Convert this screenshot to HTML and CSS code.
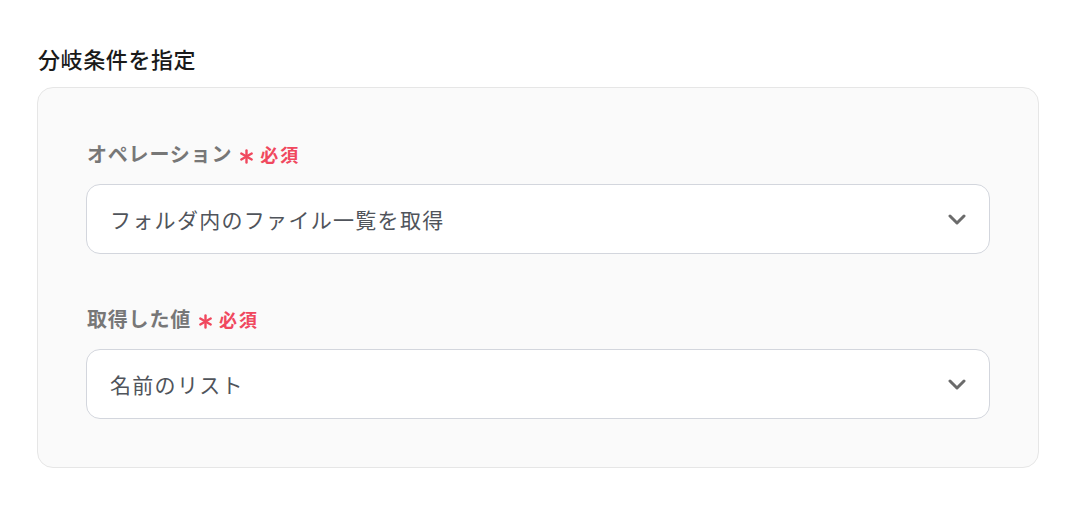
FILE: index.html
```html
<!DOCTYPE html>
<html lang="ja">
<head>
<meta charset="utf-8">
<link rel="stylesheet" href="styles.css">
</head>
<body>
<div class="page">
  <h2 class="title">分岐条件を指定</h2>
  <div class="panel">
    <div class="field">
      <div class="label">オペレーション<span class="req"><svg class="ast" width="15" height="15" viewBox="0 0 15 15"><g stroke="#f0485e" stroke-width="2.4" stroke-linecap="round"><line x1="7.5" y1="1.5" x2="7.5" y2="13.5"/><line x1="2.3" y1="4.5" x2="12.7" y2="10.5"/><line x1="2.3" y1="10.5" x2="12.7" y2="4.5"/></g></svg>必須</span></div>
      <div class="select">
        <span class="value">フォルダ内のファイル一覧を取得</span>
        <svg class="chev" width="20" height="12" viewBox="0 0 20 12"><path d="M3 3 L10 10 L17 3" fill="none" stroke="#6b6b6b" stroke-width="3" stroke-linecap="round" stroke-linejoin="round"/></svg>
      </div>
    </div>
    <div class="field">
      <div class="label">取得した値<span class="req"><svg class="ast" width="15" height="15" viewBox="0 0 15 15"><g stroke="#f0485e" stroke-width="2.4" stroke-linecap="round"><line x1="7.5" y1="1.5" x2="7.5" y2="13.5"/><line x1="2.3" y1="4.5" x2="12.7" y2="10.5"/><line x1="2.3" y1="10.5" x2="12.7" y2="4.5"/></g></svg>必須</span></div>
      <div class="select">
        <span class="value">名前のリスト</span>
        <svg class="chev" width="20" height="12" viewBox="0 0 20 12"><path d="M3 3 L10 10 L17 3" fill="none" stroke="#6b6b6b" stroke-width="3" stroke-linecap="round" stroke-linejoin="round"/></svg>
      </div>
    </div>
  </div>
</div>
</body>
</html>
```
FILE: styles.css
```css
* { box-sizing: border-box; }
html, body { margin: 0; padding: 0; background: #ffffff; }
body {
  font-family: "Noto Sans CJK JP", "Noto Sans", sans-serif;
  width: 1078px;
  height: 528px;
  overflow: hidden;
}
.page {
  padding: 42px 39px 0 37px;
}
.title {
  margin: 0 0 13px 1px;
  font-size: 22px;
  line-height: 32px;
  font-weight: 500;
  color: #1a1a1a;
  letter-spacing: 0.6px;
}
.panel {
  background: #fafafa;
  border: 1px solid #e6e6e6;
  border-radius: 16px;
  padding: 49px 48px 48px 48px;
  display: flex;
  flex-direction: column;
  gap: 48px;
}
.field {
  display: flex;
  flex-direction: column;
  gap: 13px;
}
.label {
  font-size: 20px;
  line-height: 34px;
  font-weight: 700;
  color: #777777;
  letter-spacing: 0.8px;
  padding-left: 1px;
  display: flex;
  align-items: center;
}
.req {
  color: #f0485e;
  font-size: 18px;
  font-weight: 700;
  margin-left: 7px;
  display: flex;
  align-items: center;
  letter-spacing: 2px;
}
.ast {
  display: block;
  margin-right: 6px;
  position: relative;
  top: 2px;
}
.select {
  height: 70px;
  background: #ffffff;
  border: 1px solid #d3d6dd;
  border-radius: 14px;
  display: flex;
  align-items: center;
  justify-content: space-between;
  padding: 0 22px 0 23px;
}
.value {
  font-size: 21px;
  color: #50545b;
  letter-spacing: 1.3px;
}
.chev { display: block; }
```
